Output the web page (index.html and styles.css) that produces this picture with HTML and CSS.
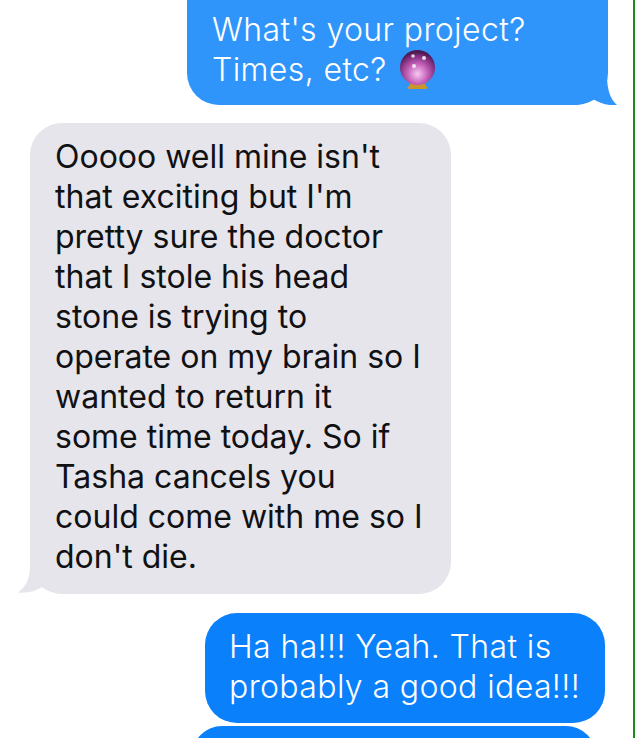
FILE: index.html
```html
<!DOCTYPE html>
<html lang="en">
<head>
<meta charset="utf-8">
<title>Messages</title>
<link rel="stylesheet" href="styles.css">
</head>
<body>
<main class="thread">
  <div class="bubble sent light first">
    <p class="line">What's your project?</p>
    <p class="line">Times, etc? <svg class="orb" viewBox="0 0 35 39" aria-label="crystal ball"><defs><radialGradient id="g" cx="50%" cy="68%" r="62%"><stop offset="0" stop-color="#f7c8f2"/><stop offset=".45" stop-color="#c764bb"/><stop offset=".85" stop-color="#7a2a78"/><stop offset="1" stop-color="#4e1a50"/></radialGradient></defs><path d="M11 32h13l2 4 2 2q-1 1-3 1H10q-2 0-3-1l2-2z" fill="#c9962e"/><circle cx="17.500" cy="17.500" r="17.500" fill="url(#g)"/><circle cx="13" cy="6" r="1.800" fill="#fff" opacity=".8"/><circle cx="24" cy="8" r="2" fill="#fff" opacity=".85"/><circle cx="14" cy="16" r="2" fill="#fff" opacity=".8"/></svg></p>
    <svg class="tail tail-right" viewBox="0 0 48 30"><path d="M37 0C37 14 40 24 47 30C38 31 29 28 23 24C17 28 10 30 0 30L0 0Z" fill="#2f95fb"/></svg>
  </div>
  <div class="bubble received">
    <p class="line">Ooooo well mine isn't</p>
    <p class="line">that exciting but I'm</p>
    <p class="line">pretty sure the doctor</p>
    <p class="line">that I stole his head</p>
    <p class="line">stone is trying to</p>
    <p class="line">operate on my brain so I</p>
    <p class="line">wanted to return it</p>
    <p class="line">some time today. So if</p>
    <p class="line">Tasha cancels you</p>
    <p class="line">could come with me so I</p>
    <p class="line">don't die.</p>
    <svg class="tail tail-left" viewBox="0 0 48 30"><path d="M12 0C12 14 9 22 0 28.500C9 29.500 18 27 24 23C30 27 38 30 48 30L48 0Z" fill="#e5e5eb"/></svg>
  </div>
  <div class="bubble sent third">
    <p class="line">Ha ha!!! Yeah. That is</p>
    <p class="line">probably a good idea!!!</p>
  </div>
  <div class="bubble sent fourth"></div>
</main>
</body>
</html>
```
FILE: styles.css
```css
html, body {
  margin: 0;
  height: 100%;
  background: #fff;
  overflow: hidden;
}
.thread {
  box-sizing: border-box;
  height: 738px;
  overflow: hidden;
  border-right: 2px solid #1c8a1c;
  display: flex;
  flex-direction: column;
  font-family: Inter, "Liberation Sans", sans-serif;
  font-size: 32px;
  line-height: 40px;
}
.line {
  margin: 0;
  white-space: nowrap;
}
.bubble {
  position: relative;
  z-index: 0;
  box-sizing: border-box;
  border-radius: 32px;
  flex: none;
}
.sent {
  color: #fff;
  background: #0a80fb;
  font-weight: 300;
  letter-spacing: .38px;
}
.light { background: #2f95fb; }
.received {
  background: #e5e5eb;
  color: #111114;
  width: 421px;
  height: 471px;
  margin: 18px 0 0 30px;
  padding: 14px 0 0 25px;
}
.first {
  width: 421px;
  height: 145px;
  margin: -40px 0 0 187px;
  padding: 50px 0 0 25px;
}
.third {
  width: 400px;
  height: 110px;
  margin: 19px 0 0 205px;
  padding: 14px 0 0 24px;
}
.fourth {
  width: 404px;
  height: 60px;
  margin: 3px 0 0 192px;
}
.orb {
  width: 35px;
  height: 39px;
  vertical-align: -8px;
  margin-left: 4px;
}
.tail {
  position: absolute;
  z-index: -1;
  width: 48px;
  height: 30px;
  bottom: 0;
}
.tail-right { right: -10px; }
.tail-left { left: -12px; }
```
